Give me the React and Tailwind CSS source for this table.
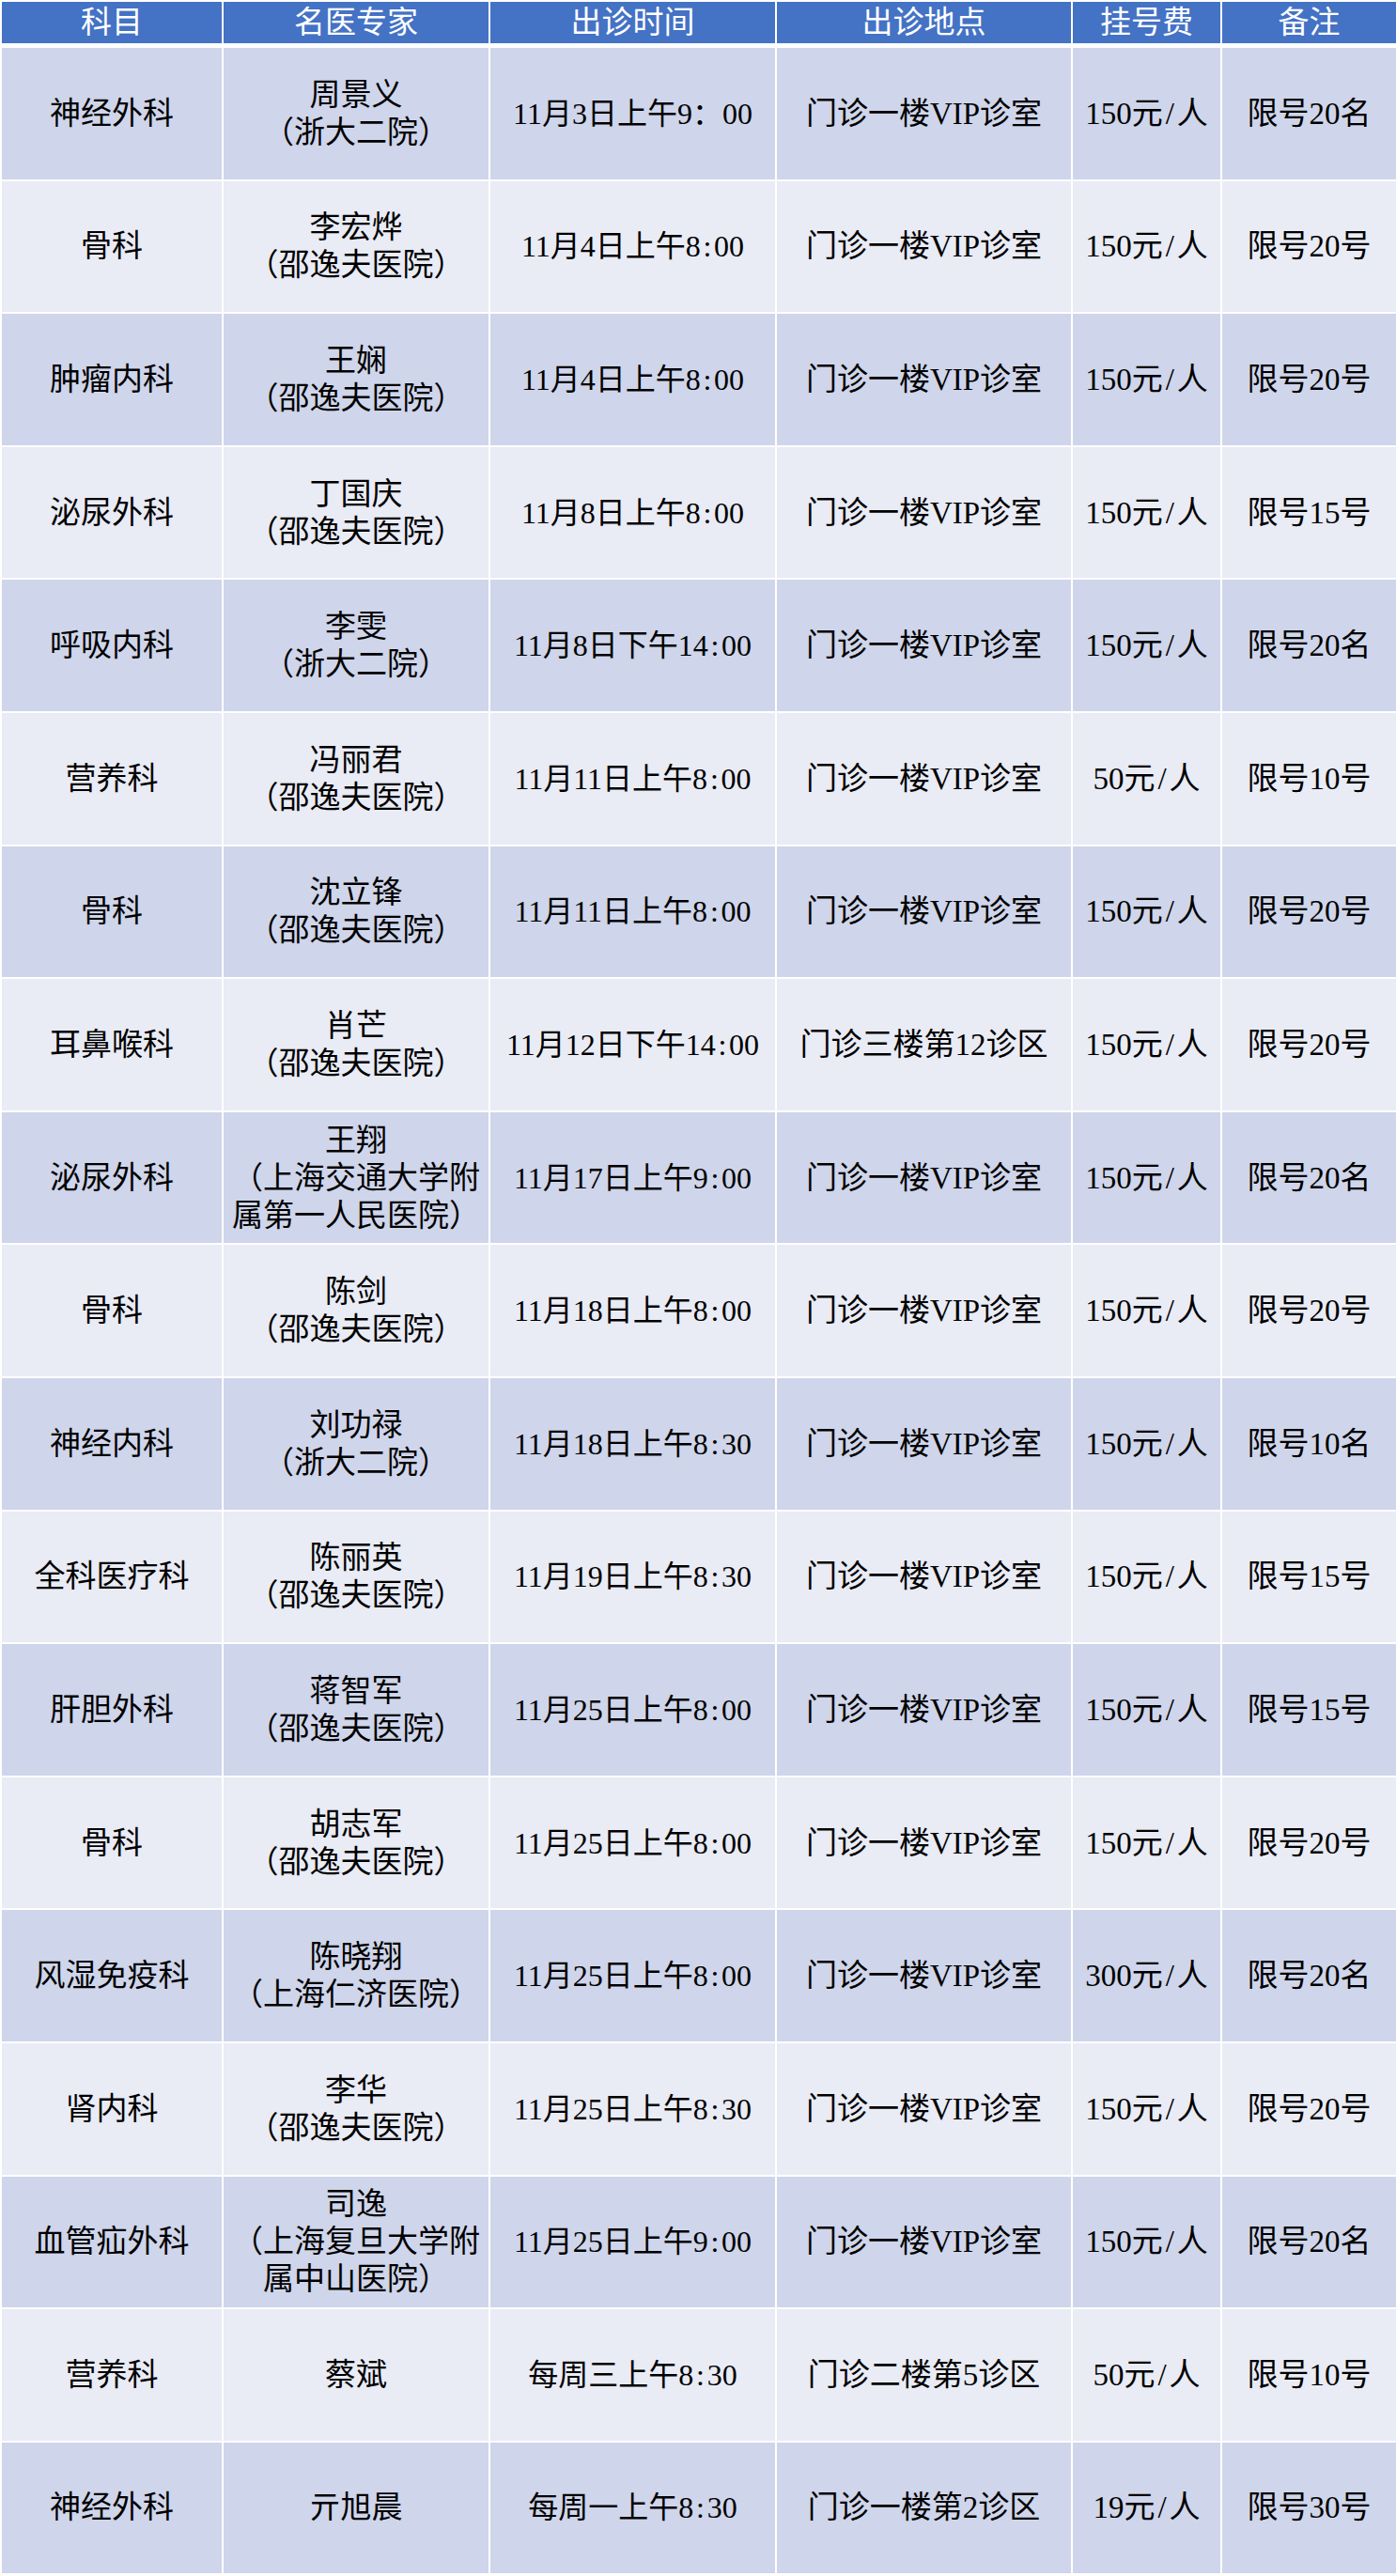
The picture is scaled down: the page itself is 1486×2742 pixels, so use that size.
const headers = ["科目", "名医专家", "出诊时间", "出诊地点", "挂号费", "备注"];

const vip = "门诊一楼VIP诊室";

const rows = [
  ["神经外科", "周景义\n（浙大二院）", "11月3日上午9：00", vip, "150元/人", "限号20名"],
  ["骨科", "李宏烨\n（邵逸夫医院）", "11月4日上午8:00", vip, "150元/人", "限号20号"],
  ["肿瘤内科", "王娴\n（邵逸夫医院）", "11月4日上午8:00", vip, "150元/人", "限号20号"],
  ["泌尿外科", "丁国庆\n（邵逸夫医院）", "11月8日上午8:00", vip, "150元/人", "限号15号"],
  ["呼吸内科", "李雯\n（浙大二院）", "11月8日下午14:00", vip, "150元/人", "限号20名"],
  ["营养科", "冯丽君\n（邵逸夫医院）", "11月11日上午8:00", vip, "50元/人", "限号10号"],
  ["骨科", "沈立锋\n（邵逸夫医院）", "11月11日上午8:00", vip, "150元/人", "限号20号"],
  ["耳鼻喉科", "肖芒\n（邵逸夫医院）", "11月12日下午14:00", "门诊三楼第12诊区", "150元/人", "限号20号"],
  ["泌尿外科", "王翔\n（上海交通大学附属第一人民医院）", "11月17日上午9:00", vip, "150元/人", "限号20名"],
  ["骨科", "陈剑\n（邵逸夫医院）", "11月18日上午8:00", vip, "150元/人", "限号20号"],
  ["神经内科", "刘功禄\n（浙大二院）", "11月18日上午8:30", vip, "150元/人", "限号10名"],
  ["全科医疗科", "陈丽英\n（邵逸夫医院）", "11月19日上午8:30", vip, "150元/人", "限号15号"],
  ["肝胆外科", "蒋智军\n（邵逸夫医院）", "11月25日上午8:00", vip, "150元/人", "限号15号"],
  ["骨科", "胡志军\n（邵逸夫医院）", "11月25日上午8:00", vip, "150元/人", "限号20号"],
  ["风湿免疫科", "陈晓翔\n（上海仁济医院）", "11月25日上午8:00", vip, "300元/人", "限号20名"],
  ["肾内科", "李华\n（邵逸夫医院）", "11月25日上午8:30", vip, "150元/人", "限号20号"],
  ["血管疝外科", "司逸\n（上海复旦大学附属中山医院）", "11月25日上午9:00", vip, "150元/人", "限号20名"],
  ["营养科", "蔡斌", "每周三上午8:30", "门诊二楼第5诊区", "50元/人", "限号10号"],
  ["神经外科", "亓旭晨", "每周一上午8:30", "门诊一楼第2诊区", "19元/人", "限号30号"],
];

const cols = "grid grid-cols-[234px_282px_303px_313px_157px_185px] gap-x-[2px]";

// the source table uses half-width-cell punctuation, so ":" and "/" get a wider box
function Text({ value }) {
  return value.split(/([:/])/).map((part, k) =>
    part === ":" || part === "/" ? (
      <span key={k} className="inline-block w-[0.45em] text-center">
        {part}
      </span>
    ) : (
      part
    )
  );
}

export default function App() {
  return (
    <div className="w-[1486px] h-[2742px] overflow-hidden bg-white pl-[2px] pt-[2px] font-['Liberation_Serif','Noto_Sans_CJK_SC',serif]">
      {/* header */}
      <div className={cols}>
        {headers.map((h) => (
          <div
            key={h}
            className="h-[44px] bg-[#4472c4] text-white text-[33px] leading-[44px] flex items-center justify-center"
          >
            {h}
          </div>
        ))}
      </div>

      {/* body */}
      <div className={`${cols} gap-y-[2px] mt-[5px]`}>
        {rows.map((row, i) =>
          row.map((cell, j) => (
            <div
              key={`${i}-${j}`}
              className={`h-[139.6px] flex items-center justify-center text-center text-black leading-[40px] whitespace-pre-line ${
                j === 2 ? "text-[32px]" : "text-[33px]"
              } ${i % 2 === 0 ? "bg-[#cfd5ea]" : "bg-[#e9ebf5]"}`}
            >
              <div>
                <Text value={cell} />
              </div>
            </div>
          ))
        )}
      </div>
    </div>
  );
}
